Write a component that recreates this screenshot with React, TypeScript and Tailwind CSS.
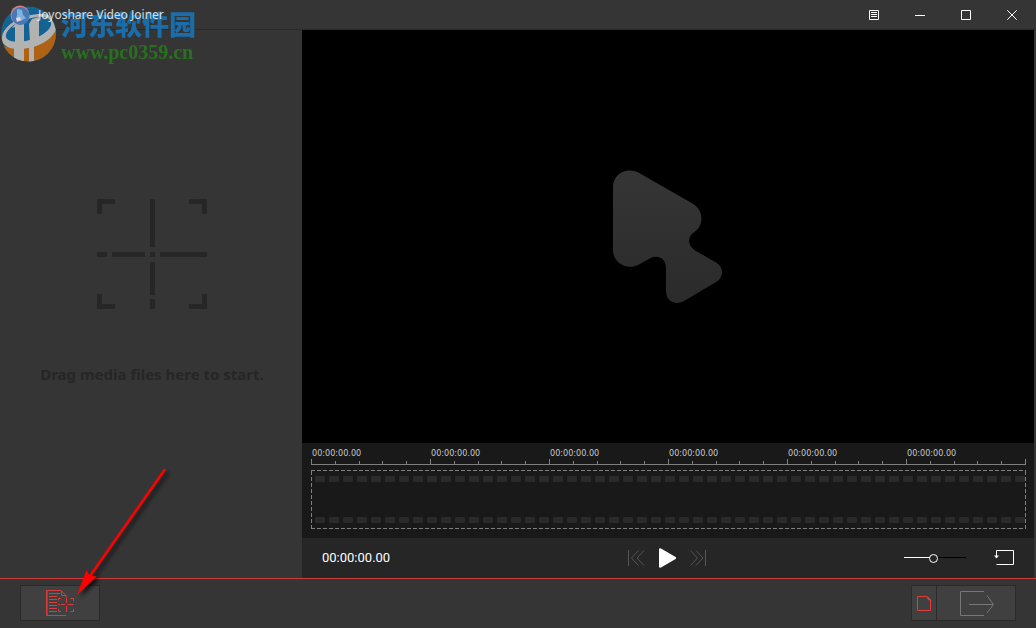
import { useState } from "react";

const MARKS = Array.from({ length: 6 }, (_, i) => i);
const HOLES = Array.from({ length: 51 }, (_, i) => i);
const EMPTY_TIME = "00:00:00.00";

const captionButton =
  "flex h-[29px] w-[46px] items-center justify-center text-white hover:bg-white/10";
const barButton =
  "flex h-9 items-center justify-center border border-[#2a2a2a] bg-[#404040] hover:bg-[#4a4a4a]";
const dashesX =
  "h-px bg-[repeating-linear-gradient(to_right,#808080_0_4px,transparent_4px_6px)]";
const dashesY =
  "w-px bg-[repeating-linear-gradient(to_bottom,#808080_0_4px,transparent_4px_6px)]";

const AppIcon = () => (
  <svg width="20" height="20" viewBox="0 0 20 20" aria-hidden="true">
    <circle cx="10" cy="10" r="9.5" fill="#cf8087" />
    <circle cx="10.500" cy="11" r="9" fill="#4a78b2" />
    <path d="M7 4l5 1 1 5 3 3-5 3-5-1 1-5z" fill="#7fb0e2" />
    <path d="M6 13l4-1 1 3-4 2z" fill="#e8d3de" />
  </svg>
);

const TitleBar = () => (
  <header className="flex h-[30px] items-center border-b border-[#2a2a2a] pl-[10px]">
    <div className="z-10 flex flex-1 items-center gap-2">
      <AppIcon />
      <h1 className="text-[12px] leading-4 text-white/80">Joyoshare Video Joiner</h1>
    </div>
    <nav className="flex pr-px" aria-label="Window">
      <button type="button" aria-label="Menu" className={captionButton}>
        <svg width="10" height="10" viewBox="0 0 10 10" stroke="currentColor" fill="none">
          <path d="M.5.5h9v9h-9zM2 2.5h6M2 4.5h6M2 6.5h6" />
        </svg>
      </button>
      <button type="button" aria-label="Minimize" className={captionButton}>
        <svg width="10" height="10" viewBox="0 0 10 10" stroke="currentColor" fill="none">
          <path d="M0 5.5h10" />
        </svg>
      </button>
      <button type="button" aria-label="Maximize" className={captionButton}>
        <svg width="10" height="10" viewBox="0 0 10 10" stroke="currentColor" fill="none">
          <path d="M.5.5h9v9h-9z" />
        </svg>
      </button>
      <button type="button" aria-label="Close" className={captionButton}>
        <svg width="10" height="10" viewBox="0 0 10 10" stroke="currentColor" fill="none">
          <path d="M.3.3l9.4 9.4M9.7.3L.3 9.7" />
        </svg>
      </button>
    </nav>
  </header>
);

const DropZone = () => (
  <section className="flex w-[302px] shrink-0 flex-col items-center pt-[169px] pl-0.5">
    <svg width="110" height="110" viewBox="0 0 110 110" fill="#262626" aria-hidden="true">
      <path d="M0 0h18v5H5v10H0zM92 0h18v15h-5V5H92zM0 95h5v10h13v5H0zM105 95h5v15H92v-5h13z" />
      <path d="M53 0h5v48h-5zM53 63h5v33h-5zM53 100h5v10h-5z" />
      <path d="M0 53h10v5H0zM15 53h33v5H15zM53 53h5v5h-5zM63 53h47v5H63z" />
    </svg>
    <p className="mt-[53px] text-[15px] leading-6 font-bold text-[#262626]">
      Drag media files here to start.
    </p>
  </section>
);

const Preview = () => (
  <div className="flex flex-1 items-center justify-center bg-black">
    <svg width="110" height="134" viewBox="0 0 110 134" aria-hidden="true">
      <defs>
        <linearGradient id="mark" x1="0" y1="0" x2="0" y2="1">
          <stop offset="0" stopColor="#353535" />
          <stop offset="1" stopColor="#2b2b2b" />
        </linearGradient>
      </defs>
      <path
        fill="url(#mark)"
        d="M0 17C0 4 14 -4 27 3.500L79.500 33.500C91 40 91 55 82 61.500C73.500 67 74.500 76 83 81L103 92.500C111 97 111 107 104 111.500L71 131C62 136 53 131 53 121V98C53 87 43 84 35 89.500L26 94.500C14 101 0 93 0 80Z"
      />
    </svg>
  </div>
);

const Perforation = () => (
  <div className="flex h-1.5 gap-1 overflow-hidden">
    {HOLES.map((hole) => (
      <span key={hole} className="h-1.5 w-2.5 shrink-0 rounded-[1px] bg-[#2a2a2a]" />
    ))}
  </div>
);

const Timeline = () => (
  <div className="bg-[#191919] pt-1 pr-2 pb-[9px] pl-[9px]">
    <div className="flex items-end border-b border-[#808080]">
      <div className="grid flex-1 grid-cols-6">
        {MARKS.map((mark) => (
          <div key={mark}>
            <time className="block pl-px font-['DejaVu_Sans_Condensed','Noto_Sans',sans-serif] text-[9px] leading-3 text-[#c8c8c8]">
              {EMPTY_TIME}
            </time>
            <div className="flex items-end">
              <span className="h-[5px] flex-1 border-l border-[#808080]" />
              <span className="h-[3px] flex-1 border-l border-[#808080]" />
              <span className="h-[3px] flex-1 border-l border-[#808080]" />
              <span className="h-[3px] flex-1 border-l border-[#808080]" />
              <span className="h-[3px] flex-1 border-l border-[#808080]" />
            </div>
          </div>
        ))}
      </div>
      <span className="h-[5px] w-px bg-[#808080]" />
    </div>
    <div className="mt-[5px] flex h-[59px] flex-col">
      <span className={dashesX} />
      <div className="flex flex-1">
        <span className={dashesY} />
        <div className="flex min-w-0 flex-1 flex-col justify-between py-[5px] pl-[3px]">
          <Perforation />
          <Perforation />
        </div>
        <span className={dashesY} />
      </div>
      <span className={dashesX} />
    </div>
  </div>
);

const PlayerControls = () => {
  const [zoom, setZoom] = useState(48);

  return (
    <div className="grid h-10 grid-cols-[1fr_auto_1fr] items-center bg-[#262626] px-5">
      <time className="font-[Roboto,sans-serif] text-[13px] leading-4 text-white">
        {EMPTY_TIME}
      </time>
      <div className="flex items-center gap-3.5 pr-0.5">
        <button type="button" aria-label="Previous" className="text-[#555]">
          <svg width="17" height="16" viewBox="0 0 17 16" stroke="currentColor" fill="none">
            <path d="M.5 0v16M10.500 .5L3.500 8l7 7.500M16 .5L9 8l7 7.500" />
          </svg>
        </button>
        <button type="button" aria-label="Play" className="text-white">
          <svg width="17" height="20" viewBox="0 0 17 20" fill="currentColor">
            <path d="M0 .5h2L17 9.300v1.400L2 19.500H0z" />
          </svg>
        </button>
        <button type="button" aria-label="Next" className="text-[#555]">
          <svg width="16" height="16" viewBox="0 0 16 16" stroke="currentColor" fill="none">
            <path d="M15.500 0v16M6 .5L13 8l-7 7.500M.5 .5L7.500 8l-7 7.500" />
          </svg>
        </button>
      </div>
      <div className="flex items-center justify-end gap-7">
        <input
          type="range"
          aria-label="Timeline zoom"
          min={0}
          max={100}
          value={zoom}
          onChange={(event) => setZoom(Number(event.target.value))}
          style={{
            backgroundImage: `linear-gradient(to right, #fff ${zoom}%, #000 ${zoom}%)`,
          }}
          className="h-[9px] w-[62px] appearance-none bg-[length:100%_1px] bg-[position:0_3px] bg-no-repeat [&::-webkit-slider-thumb]:size-[9px] [&::-webkit-slider-thumb]:appearance-none [&::-webkit-slider-thumb]:rounded-full [&::-webkit-slider-thumb]:border [&::-webkit-slider-thumb]:border-white [&::-webkit-slider-thumb]:bg-[#262626]"
        />
        <button type="button" aria-label="Reset" className="text-white">
          <svg width="20" height="16" viewBox="0 0 20 16" stroke="currentColor" fill="none">
            <path d="M2.500 8V.5h17v14H2.500" />
            <path d="M0 5.500h5L2.500 8.500z" fill="currentColor" stroke="none" />
          </svg>
        </button>
      </div>
    </div>
  );
};

const BottomBar = () => (
  <footer className="flex h-[50px] items-start justify-between border-t border-[#cf3a3a] px-5 pt-1.5">
    <button type="button" aria-label="Add media files" className={`${barButton} w-20`}>
      <svg width="28" height="26" viewBox="0 0 28 26" stroke="#d83c3c" fill="none">
        <path d="M20 25.500H.5V.5h14.500l5 5V7M15.500 1v4.500h4.500" />
        <path d="M1.500 1v24" strokeOpacity="0.6" />
        <path d="M3 3.500h11M3 6.500h8M3 9.500h8M3 12.500h8M3 15.500h8M3 18.500h8M3 21.500h8" />
        <path d="M12.500 10.500V8.500H15M24.500 8.500h3v2.500M12.500 19v2.500H15M27.500 19v2.500h-3M20.500 7.500v5.500M20.500 16v6M12 14.500h2M15 14.500h4M21.500 14.500h6" />
      </svg>
    </button>
    <div className="flex">
      <button type="button" aria-label="Output format" className={`${barButton} w-[25px] border-r-0`}>
        <svg width="14" height="15" viewBox="0 0 14 15" stroke="#e03c3c" fill="none">
          <path d="M.5.5h9.500l3.500 3.500v10.500H.5z" />
          <path d="M9 .5h1.500l3 3V5L11 3.500z" fill="#e03c3c" stroke="none" />
        </svg>
      </button>
      <button type="button" aria-label="Export" className={`${barButton} w-20 pl-0.5`}>
        <svg width="34" height="25" viewBox="0 0 34 25" stroke="#777" fill="none">
          <path d="M24 .5H.5v24H24M9 13.500h24M27 4.500l6.500 9L27 22" />
        </svg>
      </button>
    </div>
  </footer>
);

const Watermark = () => (
  <div className="pointer-events-none absolute top-1 left-0 flex items-start opacity-80">
    <svg width="57" height="60" viewBox="0 0 57 60" aria-hidden="true">
      <defs>
        <clipPath id="disc">
          <circle cx="28.500" cy="30" r="27.500" />
        </clipPath>
      </defs>
      <g clipPath="url(#disc)">
        <path d="M0 0h57v60H0z" fill="#0d6fae" />
        <path d="M3 42C20 46 42 38 56 24v36H0z" fill="#cf6e0c" />
        <path
          d="M2 33C4 20 24 9 44 10C54 11 58 16 57 23C53 37 35 45 18 45C7 45 1 40 2 33ZM6 31C5 36 11 38 19 38C33 37 49 29 51 21C52 14 45 12 37 13C22 15 8 22 6 31Z"
          fill="#d2d2d2"
          fillRule="evenodd"
        />
        <path d="M12 24L17 18 24 16V40H15V23zM29 20L32 15 39 13V36L30 39z" fill="#d2d2d2" />
        <path d="M14 44h10v16l-10-5zM29 43l5-1v18h-5z" fill="#d2d2d2" />
      </g>
    </svg>
    <div className="ml-1 font-bold">
      <p className="font-['Noto_Sans_CJK_SC',sans-serif] text-[27px] leading-10 font-black text-[#147bc9]">
        河东软件园
      </p>
      <p className="-mt-1 font-['Liberation_Serif',serif] text-[20px] leading-6 text-[#258019]">
        www.pc0359.cn
      </p>
    </div>
  </div>
);

const Pointer = () => (
  <svg
    className="pointer-events-none absolute bottom-7 left-[70px]"
    width="110"
    height="140"
    viewBox="0 0 110 140"
    aria-hidden="true"
  >
    <defs>
      <filter id="shade" x="-20%" y="-20%" width="150%" height="150%">
        <feDropShadow dx="3" dy="3" stdDeviation="2" floodColor="#000" floodOpacity="0.7" />
      </filter>
    </defs>
    <g filter="url(#shade)" fill="#f00">
      <path d="M94.500 10L20 116" stroke="#f00" strokeWidth="2.500" strokeLinecap="round" />
      <path d="M7 135l9.500-25 3 5.500 7 1z" />
    </g>
  </svg>
);

const App = () => (
  <div className="relative flex min-h-screen flex-col overflow-hidden bg-[#353535] font-['Noto_Sans',sans-serif]">
    <TitleBar />
    <main className="flex flex-1">
      <DropZone />
      <section className="mr-0.5 flex min-w-0 flex-1 flex-col">
        <Preview />
        <Timeline />
        <PlayerControls />
      </section>
    </main>
    <BottomBar />
    <Watermark />
    <Pointer />
  </div>
);

export default App;
